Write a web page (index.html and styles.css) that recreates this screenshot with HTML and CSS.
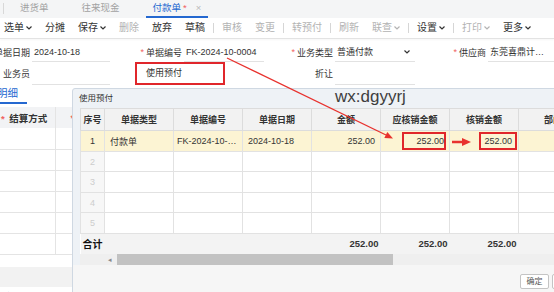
FILE: index.html
```html
<!DOCTYPE html>
<html lang="zh-CN">
<head>
    <meta charset="UTF-8">
    <meta name="viewport" content="width=device-width, initial-scale=1.0">
    <title>付款单</title>
    <link rel="stylesheet" href="styles.css">
</head>
<body>
    <!-- Tabs -->
    <div class="tabs">
        <span class="tab-sep"></span>
        <span class="tab">进货单</span>
        <span class="tab">往来现金</span>
        <span class="tab active">付款单<i class="dot">*</i><span class="close">×</span></span>
    </div>

    <!-- Toolbar -->
    <div class="toolbar">
        <span class="btn">选单<svg class="chev" viewBox="0 0 6 4"><path d="M0.5 0.5 L3 3 L5.5 0.5"/></svg></span>
        <span class="btn">分摊</span>
        <span class="btn">保存<svg class="chev" viewBox="0 0 6 4"><path d="M0.5 0.5 L3 3 L5.5 0.5"/></svg></span>
        <span class="btn off">删除</span>
        <span class="btn">放弃</span>
        <span class="btn">草稿</span>
        <span class="sep"></span>
        <span class="btn off">审核</span>
        <span class="btn off">变更</span>
        <span class="sep"></span>
        <span class="btn off">转预付</span>
        <span class="sep"></span>
        <span class="btn off">刷新</span>
        <span class="btn off">联查<svg class="chev" viewBox="0 0 6 4"><path d="M0.5 0.5 L3 3 L5.5 0.5"/></svg></span>
        <span class="sep"></span>
        <span class="btn">设置<svg class="chev" viewBox="0 0 6 4"><path d="M0.5 0.5 L3 3 L5.5 0.5"/></svg></span>
        <span class="sep"></span>
        <span class="btn off">打印<svg class="chev" viewBox="0 0 6 4"><path d="M0.5 0.5 L3 3 L5.5 0.5"/></svg></span>
        <span class="btn">更多<svg class="chev" viewBox="0 0 6 4"><path d="M0.5 0.5 L3 3 L5.5 0.5"/></svg></span>
    </div>

    <!-- Header form -->
    <div class="form">
        <div class="f c1"><span class="lab">单据日期</span><span class="val">2024-10-18</span></div>
        <div class="f c2"><span class="lab"><i class="req">*</i>单据编号</span><span class="val">FK-2024-10-0004</span></div>
        <div class="f c3"><span class="lab"><i class="req">*</i>业务类型</span><span class="val sel">普通付款<svg class="chev" viewBox="0 0 6 4"><path d="M0.5 0.5 L3 3 L5.5 0.5"/></svg></span></div>
        <div class="f c4"><span class="lab"><i class="req">*</i>供应商</span><span class="val wide">东莞喜鼎计…</span></div>

        <div class="f c1"><span class="lab">业务员</span><span class="val"></span></div>
        <div class="f c2"><span class="check-box">使用预付</span></div>
        <div class="f c3"><span class="lab">折让</span><span class="val"></span></div>
        <div class="f c4"></div>
    </div>

    <!-- Detail grid behind the dialog -->
    <div class="detail">
        <div class="detail-tab">明细</div>
        <table class="left-grid">
            <colgroup><col style="width:55px"><col style="width:25px"></colgroup>
            <thead>
                <tr><th><i class="req">*</i> 结算方式</th><th><i class="req">*</i></th></tr>
            </thead>
            <tbody>
                <tr><td></td><td></td></tr>
                <tr><td></td><td></td></tr>
                <tr><td></td><td></td></tr>
                <tr><td></td><td></td></tr>
                <tr><td></td><td></td></tr>
                <tr><td></td><td></td></tr>
            </tbody>
        </table>
        <div class="band"></div>
        <div class="detail-tab small">明细</div>
    </div>

    <!-- Dialog: 使用预付 -->
    <div class="dialog">
        <div class="dlg-title">使用预付</div>
        <div class="dlg-body">
            <table class="pick">
                <colgroup>
                    <col style="width:24px">
                    <col style="width:69px">
                    <col style="width:69px">
                    <col style="width:69px">
                    <col style="width:69px">
                    <col style="width:69px">
                    <col style="width:69px">
                    <col style="width:69px">
                </colgroup>
                <thead>
                    <tr>
                        <th>序号</th>
                        <th>单据类型</th>
                        <th>单据编号</th>
                        <th>单据日期</th>
                        <th>金额</th>
                        <th>应核销金额</th>
                        <th>核销金额</th>
                        <th>部门</th>
                    </tr>
                </thead>
                <tbody>
                    <tr class="current h21">
                        <td class="no">1</td>
                        <td>付款单</td>
                        <td class="mid">FK-2024-10-0004</td>
                        <td>2024-10-18</td>
                        <td class="num">252.00</td>
                        <td class="boxed"><span class="mark m1">252.00</span></td>
                        <td class="boxed"><span class="mark m2">252.00</span></td>
                        <td></td>
                    </tr>
                    <tr class="h20"><td class="no">2</td><td></td><td></td><td></td><td></td><td></td><td></td><td></td></tr>
                    <tr class="h21"><td class="no">3</td><td></td><td></td><td></td><td></td><td></td><td></td><td></td></tr>
                    <tr class="h20"><td class="no">4</td><td></td><td></td><td></td><td></td><td></td><td></td><td></td></tr>
                    <tr class="h21"><td class="no">5</td><td></td><td></td><td></td><td></td><td></td><td></td><td></td></tr>
                </tbody>
                <tfoot>
                    <tr>
                        <td colspan="2" class="sum-label">合计</td>
                        <td></td>
                        <td></td>
                        <td class="num">252.00</td>
                        <td class="num">252.00</td>
                        <td class="num">252.00</td>
                        <td></td>
                    </tr>
                </tfoot>
            </table>
            <div class="hscroll">
                <span class="arrow">◂</span>
                <span class="thumb"></span>
            </div>
        </div>
        <div class="dlg-foot">
            <button class="b">确定</button>
            <button class="b">取消</button>
        </div>
    </div>

    <!-- Annotations over the screenshot -->
    <div class="watermark">wx:dgyyrj</div>
    <svg class="marks" viewBox="0 0 554 292">
        <line x1="227" y1="58" x2="386" y2="135" stroke="#e8322e" stroke-width="1.3"/>
        <polygon points="393,138.5 384.3,138.1 387.3,131.9" fill="#e8322e"/>
        <line x1="452" y1="142" x2="464" y2="142" stroke="#e8322e" stroke-width="2.5"/>
        <polygon points="462,138 471,142 462,146" fill="#e8322e"/>
    </svg>
</body>
</html>
```

FILE: styles.css
```css
/* General */

* {
    box-sizing: border-box;
}

html, body {
    margin: 0;
}

body {
    width: 554px;
    height: 292px;
    overflow: hidden;
    position: relative;
    background: #fff;
    color: #333;
    font-family: "Liberation Sans", "Noto Sans CJK SC", sans-serif;
}

i {
    font-style: normal;
}

.chev {
    width: 6px;
    height: 4px;
    margin-left: 2px;
    fill: none;
    stroke: currentColor;
    stroke-width: 1.2;
}

.req {
    color: #f0625f;
    margin-right: 2px;
}

/* Tabs */

.tabs {
    height: 18px;
    background: #f4f5f6;
    display: flex;
    align-items: stretch;
    gap: 19px;
    font-size: 9.5px;
    line-height: 16px;
    color: #a2a2a2;
}

.tab-sep {
    width: 1px;
    height: 11px;
    margin: 3px 0 0 3px;
    margin-right: -10px;
    background: #d8d8d8;
}

.tab {
    padding: 0 7px;
    border-bottom: 2px solid transparent;
    white-space: nowrap;
}

.tab.active {
    color: #2468d0;
    border-bottom-color: #2468d0;
}

.tab .dot {
    color: #f0625f;
    margin-left: 2px;
}

.tab .close {
    color: #b8b8b8;
    margin-left: 9px;
}

/* Toolbar */

.toolbar {
    height: 21px;
    border-bottom: 1px solid #e3e3e3;
    box-shadow: 0 1px 2px rgba(0, 0, 0, 0.04);
    display: flex;
    align-items: center;
    gap: 13px;
    padding-left: 4px;
    font-size: 10px;
    line-height: 20px;
    color: #333;
    white-space: nowrap;
}

.toolbar .btn {
    display: inline-flex;
    align-items: center;
}

.toolbar .off {
    color: #b3b3b3;
}

.toolbar .sep {
    width: 1px;
    height: 10px;
    background: #d6d6d6;
    margin: 0 -5px;
}

/* Header form */

.form {
    display: grid;
    grid-template-columns: 135px 152px 163px 104px;
    grid-template-rows: 20px 23px;
    margin-top: 3px;
    font-size: 9px;
    color: #333;
}

.f {
    display: flex;
    align-items: stretch;
    white-space: nowrap;
    min-width: 0;
}

.lab {
    display: flex;
    justify-content: flex-end;
    align-items: center;
    flex: none;
}

.val {
    display: flex;
    align-items: center;
    margin-left: 2px;
    padding-left: 2px;
    border-bottom: 1px solid #e2e2e2;
    overflow: hidden;
}

.c1 .lab { width: 30px; }
.c1 .val { width: 78px; }
.c2 .lab { width: 47px; }
.c2 .val { width: 80px; }
.c3 .lab { width: 46px; }
.c3 .val { width: 80px; }
.c4 .lab { width: 36px; }
.c4 .val { flex: 1; }

.val.sel {
    justify-content: space-between;
    padding-right: 5px;
}

.check-box {
    width: 90px;
    height: 23px;
    border: 2px solid #e0262b;
    padding-left: 9px;
    line-height: 19px;
}

/* Detail grid */

.detail-tab {
    width: 30px;
    margin-left: -3px;
    height: 19px;
    line-height: 17px;
    font-size: 10.5px;
    color: #2468d0;
    border-bottom: 2px solid #2468d0;
}

.detail-tab.small {
    border-bottom: none;
    margin-top: 2px;
    font-size: 9px;
}

.left-grid {
    margin-top: 3px;
    border-collapse: collapse;
    table-layout: fixed;
    width: 80px;
    font-size: 9.5px;
}

.left-grid th {
    height: 21px;
    background: #f2f3f5;
    text-align: left;
    font-weight: bold;
    padding: 0 0 0 1px;
    white-space: nowrap;
    border-right: 1px solid #e4e4e4;
}

.left-grid th:last-child {
    padding-left: 15px;
}

.left-grid td {
    height: 21px;
    border-bottom: 1px solid #e4e4e4;
    border-right: 1px solid #e4e4e4;
}

.band {
    margin-top: 12px;
    height: 20px;
    background: #f2f2f2;
}

/* Dialog */

.dialog {
    position: absolute;
    left: 72px;
    top: 88px;
    width: 520px;
    height: 210px;
    border: 1px solid #cfd8e2;
    border-radius: 3px;
    background: #eef2f6;
    display: flex;
    flex-direction: column;
}

.dlg-title {
    height: 19px;
    line-height: 19px;
    padding-left: 6px;
    font-size: 8.5px;
    color: #333;
}

.dlg-body {
    padding-left: 7px;
}

.pick {
    border-collapse: collapse;
    table-layout: fixed;
    width: 507px;
    background: #fff;
    font-size: 9px;
    color: #333;
}

.pick th {
    height: 22px;
    background: #f2f2f2;
    border: 1px solid #dcdcdc;
    font-weight: bold;
    text-align: center;
    white-space: nowrap;
    overflow: hidden;
}

.pick td {
    border: 1px solid #e2e2e2;
    padding: 0 5px;
    white-space: nowrap;
    overflow: hidden;
    text-overflow: ellipsis;
}

.pick .h21 td { height: 21px; }
.pick .h20 td { height: 20px; }

.pick td.no {
    padding: 0;
    text-align: center;
    background: #f7f7f7;
    color: #cdcdcd;
}

.pick .current td {
    background: #fcf4d3;
}

.pick .current td.no {
    color: #333;
}

.pick td.mid {
    padding: 0 3px;
}

.pick td.num {
    text-align: right;
}

.pick td.boxed {
    padding: 0;
}

.mark {
    display: block;
    height: 18px;
    line-height: 14px;
    border: 2px solid #e0262b;
    text-align: right;
}

.mark.m1 {
    margin-left: 21px;
    margin-right: 3px;
    padding-right: 0;
}

.mark.m2 {
    margin-left: 29px;
    margin-right: 1px;
    padding-right: 3px;
}

.pick tfoot td {
    height: 20px;
    background: #f3f3f3;
    border: none;
    font-weight: bold;
    font-size: 9.5px;
    padding: 0 2px;
}

.pick tfoot .sum-label {
    font-size: 10px;
    color: #111;
}

.hscroll {
    height: 11px;
    background: #efefef;
    display: flex;
    align-items: stretch;
    padding-left: 28px;
}

.hscroll .arrow {
    width: 9px;
    font-size: 7px;
    line-height: 11px;
    color: #8a8a8a;
}

.hscroll .thumb {
    width: 276px;
    background: #c2c2c2;
}

.dlg-foot {
    flex: 1;
    background: #f6f6f6;
    display: flex;
    justify-content: flex-end;
    align-items: flex-start;
    gap: 3px;
    padding: 9px 10px 0 0;
}

.dlg-foot .b {
    width: 29px;
    height: 15px;
    padding: 0;
    border: 1px solid #c4c4c4;
    border-radius: 2px;
    background: #fff;
    font-family: inherit;
    font-size: 8px;
    line-height: 13px;
    color: #555;
}

/* Annotations */

.watermark {
    position: absolute;
    left: 335px;
    top: 88px;
    font-family: "Liberation Sans", sans-serif;
    font-size: 17px;
    line-height: 17px;
    color: #3e3e3e;
}

.marks {
    position: absolute;
    left: 0;
    top: 0;
    width: 554px;
    height: 292px;
    pointer-events: none;
}
```
